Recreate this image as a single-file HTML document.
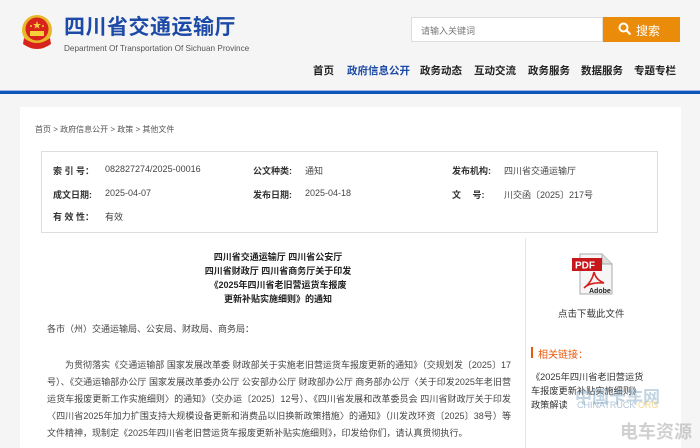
<!DOCTYPE html>
<html><head><meta charset="utf-8"><style>
*{margin:0;padding:0;box-sizing:border-box}
body{width:700px;height:448px;overflow:hidden;background:#f5f5f5;font-family:"Liberation Sans","Noto Sans CJK SC",sans-serif;color:#333;position:relative}
.a{position:absolute;white-space:nowrap}
.nav span{position:absolute;top:63px;font-size:10.5px;font-weight:bold;color:#222}
.lbl{font-size:9px;font-weight:bold;color:#333}
.val{font-size:9px;color:#444}
.p{font-size:9px;color:#444;left:47px;width:464px;line-height:17px;white-space:normal;text-align:justify}
</style></head><body>
<svg class="a" style="left:20px;top:14px" width="34" height="38" viewBox="0 0 34 38">
<circle cx="17" cy="16" r="15" fill="#e8b82a"/>
<circle cx="17" cy="15" r="11.5" fill="#d7231b"/>
<polygon points="17,7 18,10 21,10 18.6,11.8 19.5,14.8 17,13 14.5,14.8 15.4,11.8 13,10 16,10" fill="#f5d03a"/>
<circle cx="11" cy="12" r="1" fill="#f5d03a"/><circle cx="23" cy="12" r="1" fill="#f5d03a"/>
<rect x="10" y="17" width="14" height="5" fill="#f5d03a"/>
<path d="M4 24 Q17 34 30 24 L31 30 Q17 40 3 30Z" fill="#d7231b"/>
<path d="M5 24 Q17 32 29 24" stroke="#e8b82a" stroke-width="1.5" fill="none"/>
</svg>
<div class="a" style="left:64px;top:11px;font-size:21px;font-weight:bold;color:#1c4aa6;letter-spacing:0.5px;font-family:'Noto Sans CJK SC',sans-serif">四川省交通运输厅</div>
<div class="a" style="left:64px;top:44px;font-size:8.2px;color:#555">Department Of Transportation Of Sichuan Province</div>
<div class="a" style="left:411px;top:17px;width:192px;height:25px;background:#fff;border:1px solid #ddd"></div>
<div class="a" style="left:421px;top:24px;font-size:9px;color:#777">请输入关键词</div>
<div class="a" style="left:603px;top:17px;width:77px;height:25px;background:#ea8b0a"></div>
<svg class="a" style="left:618px;top:22px" width="14" height="14" viewBox="0 0 14 14"><circle cx="5.5" cy="5.5" r="4" stroke="#fff" stroke-width="2" fill="none"/><path d="M8.5 8.5L12.5 12.5" stroke="#fff" stroke-width="2.2"/></svg>
<div class="a" style="left:636px;top:22px;font-size:12px;color:#fff">搜索</div>
<div class="nav">
<span style="left:313px">首页</span>
<span style="left:347px;color:#1c4aa6">政府信息公开</span>
<span style="left:420px">政务动态</span>
<span style="left:474px">互动交流</span>
<span style="left:528px">政务服务</span>
<span style="left:581px">数据服务</span>
<span style="left:634px">专题专栏</span>
</div>
<div class="a" style="left:0;top:90px;width:700px;height:4px;background:#0d55b8;border-top:1px solid #9bb8e6"></div>
<div class="a" style="left:20px;top:107px;width:661px;height:341px;background:#fff"></div>
<div class="a" style="left:35px;top:124px;font-size:8px;color:#555">首页 &gt; 政府信息公开 &gt; 政策 &gt; 其他文件</div>
<div class="a" style="left:41px;top:151px;width:617px;height:82px;border:1px solid #ddd"></div>
<div class="a lbl" style="left:53px;top:164px">索 引 号：</div><div class="a val" style="left:105px;top:164px">082827274/2025-00016</div>
<div class="a lbl" style="left:253px;top:164px">公文种类:</div><div class="a val" style="left:305px;top:164px">通知</div>
<div class="a lbl" style="left:452px;top:164px">发布机构:</div><div class="a val" style="left:504px;top:164px">四川省交通运输厅</div>
<div class="a lbl" style="left:53px;top:188px">成文日期:</div><div class="a val" style="left:105px;top:188px">2025-04-07</div>
<div class="a lbl" style="left:253px;top:188px">发布日期:</div><div class="a val" style="left:305px;top:188px">2025-04-18</div>
<div class="a lbl" style="left:452px;top:188px">文　 号:</div><div class="a val" style="left:504px;top:188px">川交函〔2025〕217号</div>
<div class="a lbl" style="left:53px;top:210px">有 效 性：</div><div class="a val" style="left:105px;top:210px">有效</div>
<div class="a" style="left:525px;top:238px;width:1px;height:210px;background:#e5e5e5"></div>
<div class="a" style="left:140px;top:250px;width:276px;text-align:center;font-size:9px;font-weight:bold;line-height:14px;color:#222">四川省交通运输厅 四川省公安厅<br>四川省财政厅 四川省商务厅关于印发<br>《2025年四川省老旧营运货车报废<br>更新补贴实施细则》的通知</div>
<div class="a p" style="top:321px">各市（州）交通运输局、公安局、财政局、商务局：</div>
<div class="a p" style="top:357px;text-indent:18px">为贯彻落实《交通运输部 国家发展改革委 财政部关于实施老旧营运货车报废更新的通知》（交规划发〔2025〕17号）、《交通运输部办公厅 国家发展改革委办公厅 公安部办公厅 财政部办公厅 商务部办公厅〈关于印发2025年老旧营运货车报废更新工作实施细则〉的通知》（交办运〔2025〕12号）、《四川省发展和改革委员会 四川省财政厅关于印发〈四川省2025年加力扩围支持大规模设备更新和消费品以旧换新政策措施〉的通知》（川发改环资〔2025〕38号）等文件精神，现制定《2025年四川省老旧营运货车报废更新补贴实施细则》，印发给你们，请认真贯彻执行。</div>
<svg class="a" style="left:570px;top:252px" width="44" height="44" viewBox="0 0 44 44">
<path d="M10 2H32L42 12V42H10Z" fill="#f6f6f6" stroke="#aaa"/>
<path d="M32 2V12H42" fill="#ddd" stroke="#aaa"/>
<rect x="2" y="6" width="30" height="13" fill="#c8171c"/>
<text x="5" y="16.5" font-size="10" font-weight="bold" fill="#fff" font-family="Liberation Sans">PDF</text>
<path d="M24 20 Q22 30 14 36 Q20 30 34 31 Q26 28 24 20" stroke="#d41f1f" stroke-width="1.6" fill="none"/>
<text x="19" y="41" font-size="7" font-weight="bold" fill="#222" font-family="Liberation Sans">Adobe</text>
</svg>
<div class="a" style="left:558px;top:306px;font-size:9.5px;color:#333">点击下载此文件</div>
<div class="a" style="left:531px;top:347px;width:2px;height:11px;background:#e8590c"></div>
<div class="a" style="left:538px;top:346px;font-size:10px;color:#e8590c">相关链接：</div>
<div class="a" style="left:531px;top:370px;font-size:9.2px;color:#333;line-height:14px">《2025年四川省老旧营运货<br>车报废更新补贴实施细则》<br>政策解读</div>
<div class="a" style="left:575px;top:383px;font-size:17px;font-weight:bold;color:rgba(120,160,190,.45)">中国卡车网</div>
<div class="a" style="left:577px;top:400px;font-size:9px;color:rgba(110,150,180,.55)">CHINATRUCK <span style="color:rgba(230,190,60,.6)">ORG</span></div>
<div class="a" style="left:620px;top:418px;font-size:18px;font-weight:bold;color:rgba(150,150,150,.45)">电车资源</div>
</body></html>
